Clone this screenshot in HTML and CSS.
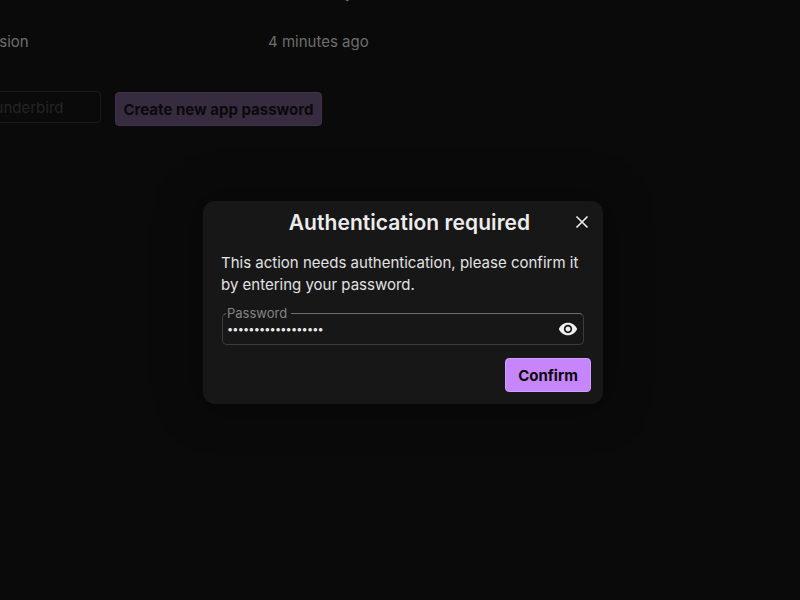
FILE: index.html
```html
<!DOCTYPE html>
<html lang="en">

<head>
    <meta charset="UTF-8">
    <meta name="viewport" content="width=device-width, initial-scale=1.0">
    <title>App passwords</title>
    <link rel="stylesheet" href="styles.css">
</head>

<body>
    <div class="page">
        <div class="row row-top">
            <span class="cell-name">Device</span>
            <span class="cell-time">Last activity</span>
        </div>
        <div class="row row-session">
            <span class="cell-name">Session</span>
            <span class="cell-time">4 minutes ago</span>
        </div>
        <div class="create-row">
            <input class="name-input" type="text" placeholder="Thunderbird" disabled>
            <button class="create-btn" type="button">Create new app password</button>
        </div>
    </div>

    <div class="overlay">
        <div class="dialog">
            <div class="dialog-header">
                <h2 class="dialog-title">Authentication required</h2>
                <button class="close-btn" type="button" aria-label="Close">
                    <svg width="14" height="14" viewBox="0 0 14 14">
                        <path d="M1.5 1.5L12.5 12.5M12.5 1.5L1.5 12.5" stroke="#f0f0f0" stroke-width="1.6" fill="none" />
                    </svg>
                </button>
            </div>
            <p class="dialog-text">This action needs authentication, please confirm it by entering your password.</p>
            <fieldset class="field">
                <legend class="field-label">Password</legend>
                <span class="field-value">••••••••••••••••••</span>
                <svg class="eye" width="20" height="20" viewBox="0 0 24 24">
                    <path fill="#f0f0f0" d="M12 4.5C7 4.5 2.73 7.61 1 12c1.73 4.39 6 7.5 11 7.5s9.27-3.11 11-7.5c-1.73-4.39-6-7.5-11-7.5zM12 17c-2.76 0-5-2.24-5-5s2.24-5 5-5 5 2.24 5 5-2.24 5-5 5zm0-8c-1.66 0-3 1.34-3 3s1.34 3 3 3 3-1.34 3-3-1.34-3-3-3z" />
                </svg>
            </fieldset>
            <div class="dialog-actions">
                <button class="confirm-btn" type="button">Confirm</button>
            </div>
        </div>
    </div>
</body>

</html>
```

FILE: styles.css
```css
* {
    margin: 0;
    padding: 0;
    box-sizing: border-box;
}

html,
body {
    height: 100%;
}

body {
    font-family: 'Inter', 'Liberation Sans', sans-serif;
    background-color: #0a0a0a;
    overflow: hidden;
}

.page {
    margin-left: -27px;
    margin-top: -17px;
}

.row {
    display: flex;
    font-size: 15px;
    line-height: 20px;
    color: #6e6e6e;
}

.row-session {
    margin-top: 29px;
}

.cell-name {
    width: 295px;
}

.create-row {
    display: flex;
    align-items: flex-start;
    gap: 14px;
    margin-top: 39px;
}

.name-input {
    width: 128px;
    height: 32px;
    padding: 0 10px 0 2px;
    background: transparent;
    border: 1px solid #1a1a1a;
    border-radius: 4px;
    font: 15px 'Inter', 'Liberation Sans', sans-serif;
}

.name-input::placeholder {
    color: #242424;
}

.create-btn {
    width: 207px;
    height: 34px;
    margin-top: 1px;
    background-color: #372b40;
    border: 1px solid #3e3148;
    border-radius: 4px;
    color: #0a0a0a;
    font: 700 15px 'Inter', 'Liberation Sans', sans-serif;
}

.overlay {
    position: absolute;
    left: 203px;
    top: 201px;
}

.dialog {
    width: 400px;
    height: 203px;
    padding: 8px 12px 12px 18px;
    background-color: #171717;
    border-radius: 12px;
    box-shadow: 0 0 40px 10px rgba(0, 0, 0, 0.25);
}

.dialog-header {
    position: relative;
    height: 30px;
}

.dialog-title {
    padding-left: 7px;
    text-align: center;
    font-size: 21px;
    line-height: 28px;
    letter-spacing: 0.06px;
    font-weight: 600;
    color: #ececec;
}

.close-btn {
    position: absolute;
    top: 6px;
    right: 2px;
    display: flex;
    background: none;
    border: none;
}

.dialog-text {
    width: 365px;
    margin-top: 13px;
    font-size: 15px;
    line-height: 22px;
    color: #e2e2e2;
}

.field {
    display: flex;
    align-items: center;
    justify-content: space-between;
    width: 362px;
    height: 39px;
    margin-top: 10px;
    margin-left: 1px;
    padding: 0 5px 6px 4px;
    border: 1px solid #3c3c3c;
    border-top-color: #6e6e6e;
    border-radius: 5px;
}

.field-label {
    margin-left: -1px;
    padding: 0 4px 0 1px;
    font-size: 13px;
    line-height: 14px;
    color: #858585;
}

.field-value {
    font-size: 11px;
    line-height: 16px;
    letter-spacing: -0.86px;
    color: #e8e8e8;
}

.eye {
    flex: none;
}

.dialog-actions {
    display: flex;
    justify-content: flex-end;
    margin-top: 13px;
}

.confirm-btn {
    width: 86px;
    height: 34px;
    background-color: #c685fb;
    border: 1px solid #d29cfc;
    border-radius: 4px;
    color: #0a0a0a;
    font: 700 15px 'Inter', 'Liberation Sans', sans-serif;
}
```
